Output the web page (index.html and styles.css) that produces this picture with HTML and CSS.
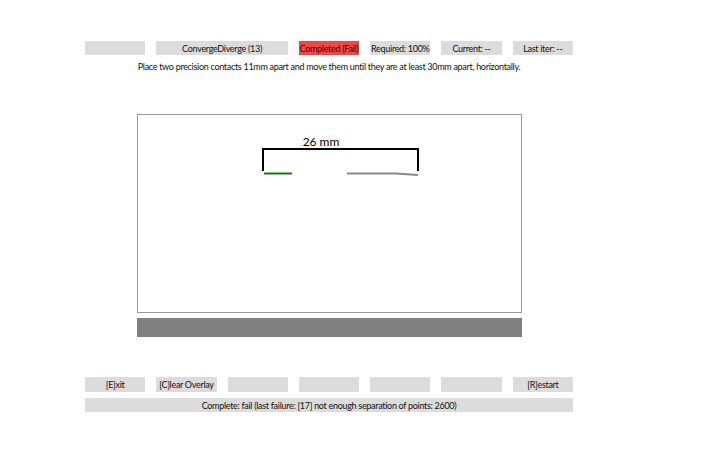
FILE: index.html
```html
<!DOCTYPE html>
<html>
<head>
<meta charset="utf-8">
<link rel="stylesheet" href="styles.css">
</head>
<body>
<div class="page">
  <div class="row top">
    <div class="cell"></div>
    <div class="cell span2">ConvergeDiverge (13)</div>
    <div class="cell fail">Completed (Fail)</div>
    <div class="cell">Required: 100%</div>
    <div class="cell">Current: --</div>
    <div class="cell">Last iter: --</div>
  </div>
  <div class="instr">Place two precision contacts 11mm apart and move them until they are at least 30mm apart, horizontally.</div>
  <div class="stage">
    <div class="canvas">
      <svg class="drawing" width="383" height="197" viewBox="0 0 383 197">
        <text x="183" y="31" class="label">26 mm</text>
        <path d="M125 56 V34 H280 V56" fill="none" stroke="#000" stroke-width="2"/>
        <line x1="126" y1="58.5" x2="154" y2="58.5" stroke="#0a7d0a" stroke-width="2"/>
        <path d="M209 58.5 H258 L280 60" fill="none" stroke="#888" stroke-width="2"/>
      </svg>
    </div>
    <div class="bar"></div>
  </div>
  <div class="row bottom">
    <div class="cell">[E]xit</div>
    <div class="cell">[C]lear Overlay</div>
    <div class="cell"></div>
    <div class="cell"></div>
    <div class="cell"></div>
    <div class="cell"></div>
    <div class="cell">[R]estart</div>
  </div>
  <div class="status">Complete: fail (last failure: [17] not enough separation of points: 2600)</div>
</div>
</body>
</html>
```
FILE: styles.css
```css
html, body {
  margin: 0;
  padding: 0;
  background: #fff;
}
body {
  font-family: Lato, "Open Sans", sans-serif;
  font-size: 9px;
  letter-spacing: -0.3px;
  color: #111;
}
.page {
  width: 488px;
  margin-left: 85px;
  padding-top: 41px;
  display: flex;
  flex-direction: column;
}
.row {
  display: grid;
  grid-template-columns: repeat(7, 1fr);
  column-gap: 11px;
}
.cell {
  background: #dcdcdc;
  height: 14px;
  display: flex;
  align-items: center;
  justify-content: center;
  white-space: nowrap;
}
.span2 {
  grid-column: span 2;
}
.fail {
  background: #f04848;
  color: #4a0000;
}
.instr {
  margin-top: 6px;
  text-align: center;
  height: 12px;
  line-height: 12px;
}
.stage {
  margin-top: 41px;
  margin-left: 52px;
  width: 385px;
  display: flex;
  flex-direction: column;
  gap: 5px;
}
.canvas {
  height: 197px;
  border: 1px solid #999;
  background: #fff;
}
.drawing {
  display: block;
}
.label {
  font-family: Lato, "Open Sans", sans-serif;
  font-size: 12px;
  letter-spacing: 0;
  fill: #000;
  text-anchor: middle;
}
.bar {
  height: 19px;
  background: #808080;
}
.bottom {
  margin-top: 40px;
}
.bottom .cell {
  height: 15px;
}
.status {
  margin-top: 6px;
  height: 14px;
  background: #dcdcdc;
  display: flex;
  align-items: center;
  justify-content: center;
}
```
